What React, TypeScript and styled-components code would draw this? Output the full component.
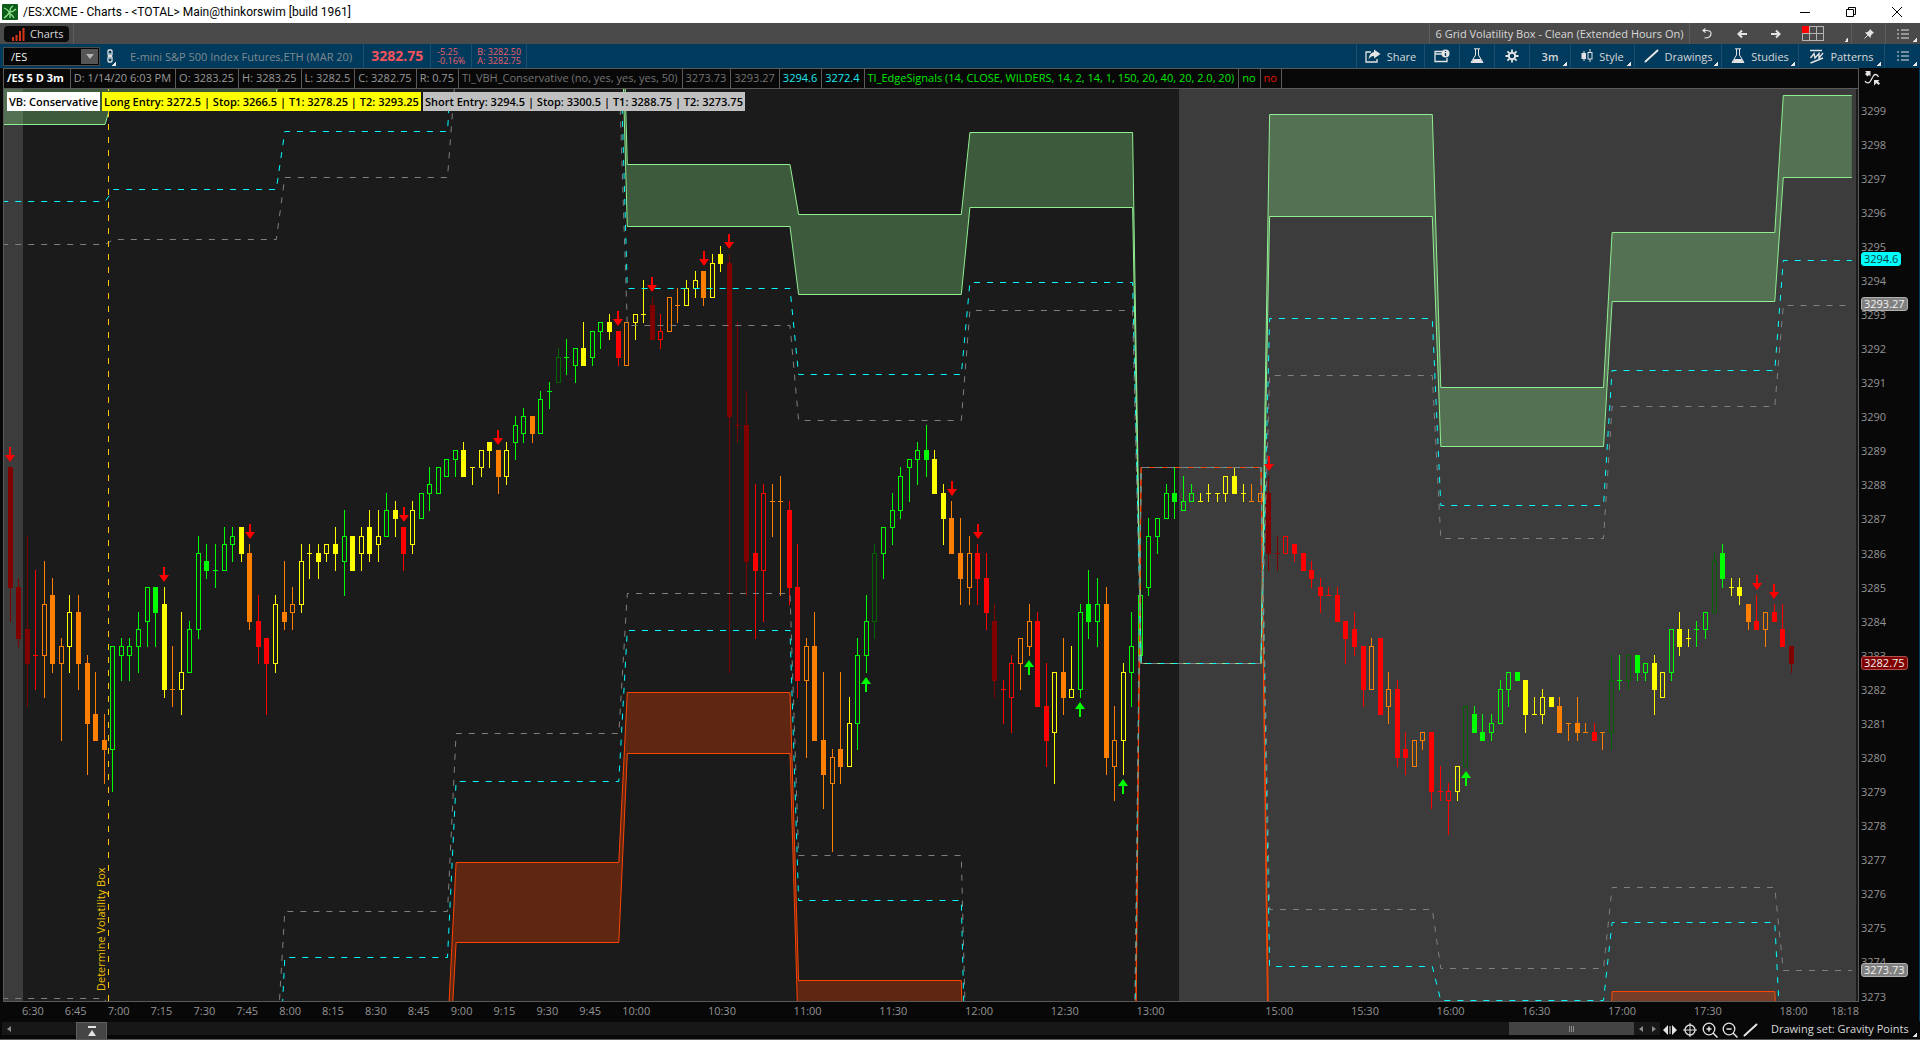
import React from "react";
import styled, { createGlobalStyle } from "styled-components";

const FONT = '"Open Sans", "Noto Sans", sans-serif';

const GlobalStyle = createGlobalStyle`
  * { box-sizing: border-box; }
  body { margin: 0; background: #080808; font-family: ${FONT}; font-size: 11px; }
  button, input, select { font: inherit; color: inherit; }
`;

/* ---------- frame ---------- */

const Page = styled.div`
  display: flex;
  flex-direction: column;
  height: 100vh;
  background: #080808;
  color: #d8d8d8;
  overflow: hidden;
`;

const TitleBar = styled.header`
  display: flex;
  align-items: center;
  flex: none;
  height: 23px;
  padding-left: 2px;
  background: #fff;
  color: #000;
`;

const WindowTitle = styled.h1`
  flex: 1;
  margin: 0 0 0 5px;
  font-family: Roboto, "Open Sans", sans-serif;
  font-size: 12px;
  font-weight: 400;
  line-height: 22px;
`;

const WindowButton = styled.button`
  display: flex;
  align-items: center;
  justify-content: center;
  width: 46px;
  height: 22px;
  padding: 0;
  border: 0;
  background: none;
`;

const Bar = styled.div`
  display: flex;
  align-items: stretch;
  flex: none;
`;

const TabBar = styled(Bar)`
  height: 21px;
  background: #4a4a4a;
`;

const SymbolBar = styled(Bar)`
  height: 24px;
  background: #003a5c;
`;

const Spacer = styled.div`
  flex: 1;
`;

const TabHolder = styled.div`
  display: flex;
  align-items: center;
  padding: 0 4px;
  border-right: 1px solid #5c5c5c;
`;

const Tab = styled.button`
  display: flex;
  align-items: center;
  gap: 5px;
  height: 16px;
  padding: 0 6px 0 8px;
  border: 0;
  border-radius: 4px;
  background: #0b0b0b;
  line-height: 16px;
`;

const ToolButton = styled.button<{ $w: number; $line?: string; $corner?: boolean; $end?: number }>`
  display: flex;
  align-items: center;
  justify-content: center;
  gap: 6px;
  width: ${(p) => p.$w}px;
  padding: 0 ${(p) => p.$end ?? 0}px 0 0;
  border: 0;
  border-left: 1px solid ${(p) => p.$line ?? "transparent"};
  background: ${(p) =>
    p.$corner
      ? "linear-gradient(135deg, transparent 50%, #e8e8e8 50%) right 3px bottom 2px / 4px 4px no-repeat"
      : "none"};
  font-size: 11px;
  white-space: nowrap;
`;

const SmallStrong = styled.span`
  font-weight: 600;
`;

/* ---------- symbol bar ---------- */

const SymbolBox = styled.div`
  display: flex;
  align-items: center;
  width: 97px;
  height: 19px;
  margin: 3px 0 0 3px;
  padding-right: 1px;
  border: 1px solid #4b4b4b;
  background: #060606;
`;

const SymbolInput = styled.input`
  flex: 1;
  min-width: 0;
  height: 17px;
  padding: 0 0 0 7px;
  border: 0;
  background: none;
  color: #f2f2f2;
  font-size: 11px;
`;

const DropButton = styled.button`
  display: flex;
  align-items: center;
  justify-content: center;
  width: 17px;
  height: 15px;
  padding: 0;
  border: 0;
  background: #555;
`;

const Field = styled.div<{ $pad: number; $color?: string }>`
  display: flex;
  flex-direction: column;
  justify-content: center;
  padding: 0 ${(p) => p.$pad}px;
  border-right: 1px solid #1c4d6c;
  color: ${(p) => p.$color ?? "#ec5f67"};
  white-space: nowrap;
`;

const Instrument = styled.span`
  color: #7f8a90;
`;

const LastPrice = styled.strong`
  font-size: 14px;
  line-height: 20px;
  color: #f4545c;
`;

const Tiny = styled.span`
  font-size: 9px;
  line-height: 9px;
`;

/* ---------- workspace ---------- */

const Workspace = styled.main`
  flex: 1;
  min-height: 0;
  display: grid;
  grid-template-columns: minmax(0, 1fr) 60px;
  padding-left: 3px;
  border-right: 1px solid #003a5c;
`;

const ChartColumn = styled.section`
  display: flex;
  flex-direction: column;
  min-width: 0;
  min-height: 0;
`;

const ChartFrame = styled.div`
  flex: 1;
  min-height: 0;
  display: flex;
  flex-direction: column;
  border: 1px solid #5a5a5a;
`;

const Legend = styled.ul`
  display: flex;
  flex: none;
  height: 20px;
  margin: 0;
  padding: 0;
  list-style: none;
  border-bottom: 1px solid #5a5a5a;
  overflow: hidden;
`;

const LegendItem = styled.li<{ $color?: string; $bold?: boolean }>`
  padding: 0 ${(p) => (p.$bold ? 6 : 4)}px 0 3px;
  border-right: 1px solid #5a5a5a;
  color: ${(p) => p.$color ?? "#9a9a9a"};
  font-size: 11px;
  font-weight: ${(p) => (p.$bold ? 700 : 400)};
  line-height: 18px;
  white-space: nowrap;
`;

const Plot = styled.div`
  position: relative;
  flex: 1;
  min-height: 0;
  display: flex;
  padding-right: 2px;
  background: #1b1b1b;
`;

const PlotSvg = styled.svg`
  flex: 1;
  min-width: 0;
  height: 100%;
`;

const Notes = styled.div`
  position: absolute;
  top: 3px;
  left: 3px;
  display: flex;
  gap: 2px;
`;

const Note = styled.span<{ $bg: string }>`
  padding: 0 2px;
  background: ${(p) => p.$bg};
  color: #000;
  font-size: 11px;
  font-weight: 600;
  line-height: 19px;
  white-space: nowrap;
`;

const TimeAxis = styled.div`
  display: grid;
  grid-template-columns: repeat(14, 5fr) repeat(6, 10fr) 15fr repeat(6, 10fr) 6fr 28px;
  flex: none;
  height: 19px;
  padding: 0 0 0 19px;
  color: #949494;
  line-height: 18px;

  span { min-width: 0; white-space: nowrap; }
`;

const PriceAxis = styled.aside`
  display: flex;
  flex-direction: column;
  padding: 2px 0 8px 2px;
  color: #949494;
`;

const ScaleButton = styled.button`
  display: flex;
  width: 20px;
  height: 18px;
  margin: 0 0 5px 3px;
  padding: 0;
  border: 0;
  background: none;
`;

const PriceList = styled.div`
  position: relative;
  flex: 1;
  display: flex;
  flex-direction: column;
`;

const PriceLabel = styled.span`
  flex: 1;
  display: flex;
  align-items: center;
  min-height: 0;
`;

const Badges = styled.div`
  position: absolute;
  inset: -1px 0 1px;
`;

const Badge = styled.span<{ $bg: string; $fg: string; $edge: string; $at: number }>`
  position: absolute;
  top: ${(p) => p.$at}%;
  transform: translateY(-50%);
  padding: 0 2px;
  border: 1px solid ${(p) => p.$edge};
  border-radius: 3px;
  background: ${(p) => p.$bg};
  color: ${(p) => p.$fg};
  line-height: 12px;
`;

/* ---------- bottom bar ---------- */

const BottomBar = styled.footer`
  display: flex;
  flex: none;
  height: 19px;
  padding-left: 2px;
  border-bottom: 1px solid #5a5a5a;
`;

const ScrollTrack = styled.div`
  flex: 1;
  display: flex;
  align-items: stretch;
  height: 13px;
  margin-top: 1px;
  background: #171717;
`;

const ScrollArrow = styled.button`
  display: flex;
  align-items: center;
  justify-content: center;
  width: 13px;
  padding: 0;
  border: 0;
  background: none;
`;

const PanelToggle = styled.button`
  display: flex;
  align-items: center;
  justify-content: center;
  width: 31px;
  height: 17px;
  margin-left: 61px;
  padding: 0;
  border: 1px solid #5e5e5e;
  border-bottom: 0;
  background: #454545;
`;

const Thumb = styled.div`
  display: flex;
  align-items: center;
  justify-content: center;
  gap: 1px;
  width: 125px;
  background: #434343;

  i { width: 1px; height: 6px; background: #8a8a8a; }
`;

const IconButton = styled.button`
  display: flex;
  align-items: center;
  justify-content: center;
  width: 20px;
  height: 17px;
  padding: 0;
  border: 0;
  background: none;
`;

const DrawingSet = styled.button`
  width: 160px;
  padding: 0 0 2px 11px;
  border: 0;
  background: linear-gradient(135deg, transparent 50%, #e8e8e8 50%) right 3px bottom 2px / 4px 4px no-repeat;
  line-height: 16px;
  text-align: left;
  white-space: nowrap;
`;

/* ---------- icons ---------- */

const INK = "#e4e4e4";

const Svg = ({ w, h, children }: { w: number; h: number; children: React.ReactNode }) => (
  <svg width={w} height={h} viewBox={`0 0 ${w} ${h}`} fill="none" stroke={INK} aria-hidden="true">
    {children}
  </svg>
);

const AppIcon = () => (
  <Svg w={16} h={16}>
    <rect width="16" height="16" rx="1" fill="#0d5c1c" stroke="none" />
    <path d="M2 14c3-2 5-4 6-7M8 7c0-2 1-4 3-5M8 8c2 0 4-1 6-3M7 9c2 1 4 3 5 5M7 8C6 6 5 5 2 4M8 9v5" stroke="#8fe08a" strokeWidth="1.3" />
  </Svg>
);
const BarsIcon = () => (
  <Svg w={13} h={14}>
    <path d="M1 14v-4M4.500 14V8M8 14V4M11.500 14V1" stroke="#d8361a" strokeWidth="2" />
  </Svg>
);
const Flask = () => (
  <Svg w={14} h={16}>
    <path d="M4 .8h6M5.500 1v6L1 14.500h12L8.500 7V1" />
    <path d="M3.500 11h7l2.200 4H1.300z" fill={INK} stroke="none" />
  </Svg>
);
const ListIcon = () => (
  <Svg w={12} h={10}>
    <path d="M0 1h2M4 1h8M0 5h2M4 5h8M0 9h2M4 9h8" strokeWidth="1.200" />
  </Svg>
);
const Slash = () => (
  <Svg w={15} h={14}>
    <path d="M1.500 12.500L13.500 1.500" strokeWidth="2" strokeLinecap="round" />
  </Svg>
);
const ArrowIcon = ({ flip }: { flip?: boolean }) => (
  <Svg w={10} h={10}>
    <path d={flip ? "M0 5h8M5 1.500L8.500 5 5 8.500" : "M10 5H2M5 1.500L1.500 5 5 8.500"} strokeWidth="2" />
  </Svg>
);
const GearIcon = () => (
  <Svg w={14} h={14}>
    <circle cx="7" cy="7" r="3.200" strokeWidth="2" />
    <path d="M7 .5v2.500M7 11v2.500M.5 7H3M11 7h2.500M2.400 2.400l1.800 1.800M9.800 9.800l1.800 1.800M2.400 11.600l1.800-1.800M9.800 4.200l1.800-1.800" strokeWidth="1.800" />
  </Svg>
);
const ShareIcon = () => (
  <Svg w={16} h={14}>
    <path d="M6 3H1v10h11v-3" strokeWidth="1.300" />
    <path d="M9 .5L15.500 5 9 9.500V7C6.500 7 5 8 3.500 10.500 4 6 6 3.500 9 3z" fill={INK} stroke="none" />
  </Svg>
);
const InfoWindow = () => (
  <Svg w={16} h={14}>
    <path d="M8 2.500H1v10h12V9M1 5h7" strokeWidth="1.300" />
    <circle cx="11.500" cy="4.500" r="4" fill={INK} stroke="none" />
    <path d="M11.500 2v1M11.500 4v3" stroke="#003a5c" strokeWidth="1.300" />
  </Svg>
);
const StyleIcon = () => (
  <Svg w={12} h={14}>
    <path d="M3 2v10M9 0v3.500M9 10v3" />
    <rect x=".5" y="4" width="4.500" height="6" fill={INK} stroke="none" />
    <rect x="7" y="3.500" width="4" height="6.500" />
  </Svg>
);
const PatternIcon = () => (
  <Svg w={15} h={15}>
    <path d="M1 1.500h12" strokeWidth="1.500" />
    <path d="M1.500 9L5 4.500l1 4.500 4-4.500v4.500L14 4M1.500 14L14 9" strokeWidth="1.400" />
  </Svg>
);
const LinkIcon = () => (
  <Svg w={8} h={14}>
    <rect x="2" y="1" width="4" height="5.500" rx="1" strokeWidth="1.300" />
    <rect x="2" y="7.500" width="4" height="5.500" rx="1" strokeWidth="1.300" />
    <path d="M4 4v6" strokeWidth="1.300" />
  </Svg>
);
const GridIcon = () => (
  <Svg w={22} h={15}>
    <rect x=".5" y=".5" width="21" height="14" stroke="#b4b4b4" />
    <path d="M.5 7.500h21M7.500.5v14M14.500.5v14" stroke="#b4b4b4" />
    <rect width="7" height="7" fill="#f00" stroke="none" />
  </Svg>
);
const UndoIcon = () => (
  <Svg w={10} h={11}>
    <path d="M2.500 10C7 10 9 8 9 5.500S7 2.500 4.500 2.500H1.500M3.500.5l-2.500 2 2.500 2" strokeWidth="1.200" />
  </Svg>
);
const PinIcon = () => (
  <Svg w={10} h={10}>
    <path d="M6 0l4 4-1.200.5L7 6.300 6.500 9 1 3.500 3.700 3 5.500 1.200z" fill={INK} stroke="none" />
    <path d="M4 6L.5 9.500" />
  </Svg>
);
const ScaleIcon = () => (
  <Svg w={17} h={16}>
    <path d="M1 1h5.500v5.500L5 5 3.500 6.500 1 4l1.500-1.500z" fill={INK} stroke="none" />
    <path d="M10 10h5.500l-1.500 1.500 2 2-1.500 1.500-2-2L10 15.500z" fill={INK} stroke="none" />
    <path d="M1 11c1 2 4 3 5.500 0L9 6.500C10.500 3.500 13 4 14.500 7" strokeWidth="1.300" />
  </Svg>
);

/* ---------- chart data ---------- */

// Bars as "tone high top bottom low", in quarter points above 3270.
// A capital tone is a filled body, a small one is hollow; equal top and bottom is a doji.
const BARS = `
M 74 74 60 56|M 61 60 54 53|M 66 55 51 46|R 62 52 52 48|o 63 58 52 47|O 61 59 51 50|o 54 53 51 42|y 59 57 53 50|O 59 57 51 48|O 52 51 44 38|
O 50 45 42 42|O 45 42 41 37|g 53 53 41 36|g 54 53 52 49|g 54 53 52 49|g 57 55 53 50|g 60 60 56 53|G 60 60 57 53|Y 60 58 48 47|O 53 48 48 46|
y 57 50 48 45|g 56 55 50 50|g 66 64 55 54|G 65 63 62 61|G 65 62 62 60|g 67 65 62 62|g 67 66 65 63|Y 67 67 64 63|O 65 64 56 55|R 59 56 53 51|
R 54 54 51 45|y 59 58 51 50|O 63 57 56 55|o 60 58 57 55|y 65 63 58 57|Y 65 64 64 61|Y 65 64 63 61|y 65 65 64 63|Y 67 65 64 62|g 69 66 63 59|
Y 66 66 62 62|y 67 66 64 62|Y 69 67 64 63|y 69 66 65 63|g 71 69 66 66|Y 70 69 68 66|R 67 67 64 62|y 70 69 65 64|g 71 71 68 68|g 74 72 71 69|
g 74 74 71 71|g 75 75 73 73|g 76 76 75 73|Y 77 76 73 73|Y 74 74 74 72|y 76 76 74 73|Y 77 77 76 74|O 76 76 73 71|y 77 76 73 72|g 80 79 77 75|
g 81 80 78 77|O 80 80 78 77|g 83 82 78 78|G 84 83 83 81|k 88 87 84 84|G 89 87 87 85|g 88 88 86 84|Y 91 88 86 86|g 90 90 87 86|g 91 91 90 88|
Y 92 91 90 89|R 90 90 87 86|o 91 91 86 86|y 92 92 91 89|Y 96 92 92 91|M 94 93 89 89|r 92 90 89 88|o 94 94 90 90|O 95 93 93 91|y 96 95 93 93|
y 97 96 95 94|O 97 97 94 93|y 99 98 94 94|Y 100 99 98 97|M 99 98 80 50|M 91 79 79 77|M 83 79 63 59|R 72 64 62 54|r 72 71 62 56|O 72 70 70 66|
O 73 70 70 59|R 70 69 60 58|R 65 60 49 47|o 54 53 49 40|O 57 53 42 42|O 50 42 38 34|o 41 40 37 29|O 50 41 39 37|y 47 44 39 39|g 54 52 44 41|
g 59 56 52 50|k 65 64 56 54|g 67 67 64 61|g 71 69 67 65|g 74 73 69 68|g 75 75 74 70|g 77 76 75 72|G 79 76 75 73|Y 76 75 71 71|Y 72 71 68 65|
O 70 68 64 64|O 68 64 61 58|o 66 64 60 58|R 65 64 61 58|R 64 61 57 55|M 58 56 49 47|R 49 48 48 44|r 52 51 47 43|o 54 54 51 48|o 58 56 53 52|
R 57 56 46 46|R 51 46 42 39|y 50 50 43 37|O 54 50 47 45|y 53 48 47 47|g 58 57 48 47|G 62 58 56 54|g 61 58 56 53|O 60 58 40 38|o 46 42 39 35|
y 51 50 42 38|g 57 53 50 46|g 62 59 52 52|g 68 66 60 59|g 68 68 66 64|g 72 71 68 68|G 74 71 70 68|g 73 70 69 69|g 72 71 70 70|Y 71 70 70 70|
Y 72 71 71 70|Y 71 71 71 70|y 73 73 71 70|Y 74 73 71 71|Y 72 71 71 70|O 72 70 70 70|o 71 71 70 70|M 73 71 64 62|M 66 64 64 62|r 66 66 64 64|
R 65 65 64 63|R 64 64 62 62|R 63 62 61 60|R 61 60 59 57|R 60 59 59 59|R 60 59 56 56|R 56 56 54 51|R 57 55 53 52|R 53 53 48 46|o 54 53 48 48|
R 54 54 45 45|o 50 48 46 44|R 49 48 40 39|R 43 41 40 38|o 42 42 39 39|o 43 43 42 41|R 43 43 36 34|R 39 36 36 35|r 37 36 35 31|y 39 39 36 35|
k 46 46 39 39|G 46 45 43 43|G 45 43 42 42|g 45 44 43 42|g 49 48 44 44|g 50 50 48 46|G 50 50 49 49|Y 49 49 45 43|Y 47 45 45 45|y 48 47 45 44|
Y 47 47 46 46|O 47 46 43 43|O 44 44 44 42|O 47 44 43 42|O 44 43 43 43|R 44 43 42 42|O 43 43 43 41|k 52 49 43 41|G 52 49 49 48|k 52 52 49 48|
G 52 52 50 49|g 51 51 50 49|Y 52 51 48 45|y 50 50 47 47|g 55 55 50 49|Y 57 55 53 52|Y 55 54 54 53|G 56 55 55 53|g 57 57 55 54|k 64 63 57 57|
G 65 64 61 60|Y 61 60 60 59|Y 61 60 59 58|O 58 58 56 55|R 59 56 55 55|o 57 57 55 53|R 58 57 56 56|R 58 55 53 53|M 53 53 51 50`
  .split("|")
  .map((row) => {
    const [tone, ...n] = row.trim().split(" ");
    const [high, top, bottom, low] = n.map(Number);
    return { tone, high, top, bottom, low };
  });

const TONES: Record<string, string> = {
  m: "#800000", r: "#ff0000", o: "#ff8000", y: "#ffff00", g: "#00ff00", k: "#006400",
};

const SELL = [0, 18, 28, 46, 57, 71, 75, 81, 84, 110, 113, 147, 204, 206];
const BUY = [100, 119, 125, 130, 170];

const STEP = 8.563;
const xOf = (bar: number) => Math.floor(10.05 + STEP * bar);
const arrowX = (bar: number) => Math.round(10 + STEP * bar);
const lineX = (bar: number) => (10.8 + STEP * bar).toFixed(1);
const yOf = (tick: number) => Math.round(1098 - 8.5225 * tick);

// First and last bar of each hourly session.
const SESSIONS = [
  [-1, 11], [12, 31], [32, 51], [52, 71], [72, 91], [92, 111], [112, 131],
  [132, 146], [147, 166], [167, 186], [187, 206], [207, 215],
];

// One level for each session, in plot units.
const LEVELS = {
  shortTop: [40, 20, -60, -150, 164, 214, 132, 663, 114, 387, 232, 95],
  shortBottom: [124, 95, 20, -80, 226, 294, 207, 663, 216, 446, 301, 177],
  longTop: [1300, 1250, 1033, 862, 692, 980, 1330, 467, 1100, 1180, 991, 1150],
  longBottom: [1400, 1350, 1095, 942, 753, 1045, 1400, 467, 1180, 1260, 1060, 1220],
  shortEntry: [201, 189, 131, -10, 288, 374, 282, 663, 318, 505, 370, 260],
  shortTarget: [244, 239, 177, 65, 325, 420, 310, 663, 375, 538, 406, 305],
  longEntry: [1180, 1130, 957, 781, 630, 900, 1260, 467, 966, 1000, 922, 1090],
  longTarget: [998, 1054, 911, 733, 593, 855, 1200, 467, 909, 968, 887, 970],
};

const points = (levels: number[]) =>
  levels.flatMap((y, i) => SESSIONS[i].map((bar) => `${lineX(bar)},${y + 0.5}`));

const Band = ({ a, b, color }: { a: number[]; b: number[]; color: string }) => (
  <g stroke={color} fill="none">
    <polygon points={[...points(a), ...points(b).reverse()].join(" ")} fill={color} fillOpacity="0.3" stroke="none" />
    <polyline points={points(a).join(" ")} />
    <polyline points={points(b).join(" ")} />
  </g>
);

const Dashed = ({ levels, color }: { levels: number[]; color: string }) => (
  <polyline points={points(levels).join(" ")} fill="none" stroke={color} strokeDasharray="6 7" />
);

const Candles = () => (
  <g shapeRendering="crispEdges">
    {BARS.map(({ tone, high, top, bottom, low }, i) => {
      const color = TONES[tone.toLowerCase()];
      const x = xOf(i);
      const [yh, yt, yb, yl] = [high, top, bottom, low].map(yOf);
      const hollow = tone === tone.toLowerCase();
      return (
        <g key={i} fill={color}>
          {yh < yt && <rect x={x} y={yh} width="1" height={yt - yh} />}
          {yl > yb && <rect x={x} y={yb + 1} width="1" height={yl - yb} />}
          {hollow ? (
            <rect x={x - 1.5} y={yt + 0.5} width="4" height={yb - yt} fill="none" stroke={color} />
          ) : (
            <rect x={x - 2} y={yt} width="5" height={yb - yt + 1} />
          )}
        </g>
      );
    })}
  </g>
);

const Signals = () => (
  <g>
    {SELL.map((i) => (
      <path key={i} transform={`translate(${arrowX(i)} ${yOf(BARS[i].high) - 5})`} d="M-1-15h2v8h4l-5 7-5-7h4z" fill="#f00" />
    ))}
    {BUY.map((i) => (
      <path key={i} transform={`translate(${arrowX(i)} ${yOf(BARS[i].low) + 5})`} d="M-1 15h2v-8h4L0 0l-5 7h4z" fill="#0f0" />
    ))}
  </g>
);

const Chart = () => (
  <PlotSvg viewBox="4 89 1852 912" preserveAspectRatio="none" role="img" aria-label="E-mini S&P 500 three minute candles">
    <rect x="4" y="89" width="19" height="912" fill="#3c3c3c" />
    <rect x="1179" y="89" width="677" height="912" fill="#3c3c3c" />
    <Candles />
    <Band a={LEVELS.shortTop} b={LEVELS.shortBottom} color="#90ee90" />
    <Band a={LEVELS.longTop} b={LEVELS.longBottom} color="#ff4500" />
    <Dashed levels={LEVELS.shortEntry} color="#00ffff" />
    <Dashed levels={LEVELS.longEntry} color="#00ffff" />
    <Dashed levels={LEVELS.shortTarget} color="#808080" />
    <Dashed levels={LEVELS.longTarget} color="#808080" />
    <path d="M108.500 85V1001" stroke="#ffc800" strokeDasharray="6 7" />
    <text transform="translate(105 991) rotate(-90)" fill="#f0c000" fontSize="11" fontFamily={FONT}>
      Determine Volatility Box
    </text>
    <Signals />
  </PlotSvg>
);

/* ---------- texts ---------- */

const CYAN = "#1fe8f0";
const LEGEND: { text: string; color?: string; bold?: boolean }[] = [
  { text: "/ES 5 D 3m", color: "#fff", bold: true },
  { text: "D: 1/14/20 6:03 PM" },
  { text: "O: 3283.25" },
  { text: "H: 3283.25" },
  { text: "L: 3282.5" },
  { text: "C: 3282.75" },
  { text: "R: 0.75" },
  { text: "TI_VBH_Conservative (no, yes, yes, yes, 50)", color: "#747474" },
  { text: "3273.73", color: "#747474" },
  { text: "3293.27", color: "#747474" },
  { text: "3294.6", color: CYAN },
  { text: "3272.4", color: CYAN },
  { text: "TI_EdgeSignals (14, CLOSE, WILDERS, 14, 2, 14, 1, 150, 20, 40, 20, 2.0, 20)", color: "#00e600" },
  { text: "no", color: "#00e600" },
  { text: "no", color: "#e61400" },
];

const TIMES =
  "6:30 6:45 7:00 7:15 7:30 7:45 8:00 8:15 8:30 8:45 9:00 9:15 9:30 9:45 10:00 10:30 11:00 11:30 12:00 12:30 13:00 15:00 15:30 16:00 16:30 17:00 17:30 18:00 18:18".split(" ");

const PRICES = Array.from({ length: 27 }, (_, i) => 3299 - i);
const atPrice = (p: number) => ((3299.5 - p) / 27) * 100;

const LINE = "#1c4d6c";
const GREY_LINE = "#5c5c5c";

export default function App() {
  return (
    <Page>
      <GlobalStyle />
      <TitleBar>
        <AppIcon />
        <WindowTitle>/ES:XCME - Charts - &lt;TOTAL&gt; Main@thinkorswim [build 1961]</WindowTitle>
        <WindowButton aria-label="Minimize">
          <Svg w={10} h={10}><path d="M0 5.500h10" stroke="#000" /></Svg>
        </WindowButton>
        <WindowButton aria-label="Restore">
          <Svg w={10} h={10}><path d="M.5 2.500h7v7h-7zM2.500 2.500v-2h7v7h-2" stroke="#000" /></Svg>
        </WindowButton>
        <WindowButton aria-label="Close">
          <Svg w={10} h={10}><path d="M0 0l10 10M10 0L0 10" stroke="#000" /></Svg>
        </WindowButton>
      </TitleBar>

      <TabBar>
        <TabHolder>
          <Tab><BarsIcon />Charts</Tab>
        </TabHolder>
        <Spacer />
        <ToolButton $w={260} $line={GREY_LINE}>6 Grid Volatility Box - Clean (Extended Hours On)</ToolButton>
        <ToolButton $w={35} $line={GREY_LINE} aria-label="Undo"><UndoIcon /></ToolButton>
        <ToolButton $w={34} aria-label="Back"><ArrowIcon /></ToolButton>
        <ToolButton $w={34} aria-label="Forward"><ArrowIcon flip /></ToolButton>
        <ToolButton $w={59} $corner $end={18} aria-label="Grid"><GridIcon /></ToolButton>
        <ToolButton $w={34} $line={GREY_LINE} aria-label="Pin"><PinIcon /></ToolButton>
        <ToolButton $w={35} $line={GREY_LINE} $corner aria-label="Menu"><ListIcon /></ToolButton>
      </TabBar>

      <SymbolBar>
        <SymbolBox>
          <SymbolInput aria-label="Symbol" defaultValue="/ES" />
          <DropButton aria-label="Recent symbols">
            <Svg w={8} h={5}><path d="M0 0h8L4 5z" fill="#b4b4b4" stroke="none" /></Svg>
          </DropButton>
        </SymbolBox>
        <ToolButton $w={19} $corner aria-label="Link"><LinkIcon /></ToolButton>
        <Field $pad={11}><Instrument>E-mini S&amp;P 500 Index Futures,ETH (MAR 20)</Instrument></Field>
        <Field $pad={7}><LastPrice>3282.75</LastPrice></Field>
        <Field $pad={6}><Tiny>-5.25</Tiny><Tiny>-0.16%</Tiny></Field>
        <Field $pad={5}><Tiny>B: 3282.50</Tiny><Tiny>A: 3282.75</Tiny></Field>
        <Spacer />
        <ToolButton $w={68} $line={LINE}><ShareIcon />Share</ToolButton>
        <ToolButton $w={35} $line={LINE} aria-label="Info"><InfoWindow /></ToolButton>
        <ToolButton $w={35} $line={LINE} aria-label="Edit studies"><Flask /></ToolButton>
        <ToolButton $w={35} $line={LINE} aria-label="Settings"><GearIcon /></ToolButton>
        <ToolButton $w={41} $line={LINE} $corner><SmallStrong>3m</SmallStrong></ToolButton>
        <ToolButton $w={64} $line={LINE} $corner><StyleIcon />Style</ToolButton>
        <ToolButton $w={87} $line={LINE} $corner><Slash />Drawings</ToolButton>
        <ToolButton $w={77} $line={LINE} $corner><Flask />Studies</ToolButton>
        <ToolButton $w={86} $line={LINE} $corner><PatternIcon />Patterns</ToolButton>
        <ToolButton $w={36} $line={LINE} $corner aria-label="Chart menu"><ListIcon /></ToolButton>
      </SymbolBar>

      <Workspace>
        <ChartColumn>
          <ChartFrame>
            <Legend>
              {LEGEND.map((item, i) => (
                <LegendItem key={i} $color={item.color} $bold={item.bold}>{item.text}</LegendItem>
              ))}
            </Legend>
            <Plot>
              <Chart />
              <Notes>
                <Note $bg="#ffffff">VB: Conservative</Note>
                <Note $bg="#ffff00">Long Entry: 3272.5 | Stop: 3266.5 | T1: 3278.25 | T2: 3293.25</Note>
                <Note $bg="#c0c0c0">Short Entry: 3294.5 | Stop: 3300.5 | T1: 3288.75 | T2: 3273.75</Note>
              </Notes>
            </Plot>
          </ChartFrame>
          <TimeAxis>
            {TIMES.map((t) => <span key={t}>{t}</span>)}
          </TimeAxis>
        </ChartColumn>
        <PriceAxis>
          <ScaleButton aria-label="Fit price scale"><ScaleIcon /></ScaleButton>
          <PriceList>
            {PRICES.map((p) => <PriceLabel key={p}>{p}</PriceLabel>)}
            <Badges>
              <Badge $at={atPrice(3294.6)} $bg="#00ffff" $fg="#083c3c" $edge="#00ffff">3294.6</Badge>
              <Badge $at={atPrice(3293.27)} $bg="#808080" $fg="#f0f0f0" $edge="#b0b0b0">3293.27</Badge>
              <Badge $at={atPrice(3282.75)} $bg="#800000" $fg="#f0f0f0" $edge="#b05050">3282.75</Badge>
              <Badge $at={atPrice(3273.73)} $bg="#808080" $fg="#f0f0f0" $edge="#b0b0b0">3273.73</Badge>
            </Badges>
          </PriceList>
        </PriceAxis>
      </Workspace>

      <BottomBar>
        <ScrollTrack>
          <ScrollArrow aria-label="Scroll to start">
            <Svg w={4} h={6}><path d="M4 0v6L0 3z" fill="#8a8a8a" stroke="none" /></Svg>
          </ScrollArrow>
          <PanelToggle aria-label="Show lower panel">
            <Svg w={8} h={10}><path d="M0 1h8" strokeWidth="2" /><path d="M4 4l4 6H0z" fill={INK} stroke="none" /></Svg>
          </PanelToggle>
          <Spacer />
          <Thumb><i /><i /><i /></Thumb>
          <ScrollArrow aria-label="Scroll left">
            <Svg w={4} h={6}><path d="M4 0v6L0 3z" fill="#8a8a8a" stroke="none" /></Svg>
          </ScrollArrow>
          <ScrollArrow aria-label="Scroll right">
            <Svg w={4} h={6}><path d="M0 0v6l4-3z" fill="#8a8a8a" stroke="none" /></Svg>
          </ScrollArrow>
        </ScrollTrack>
        <IconButton aria-label="Expand time axis">
          <Svg w={14} h={10}>
            <path d="M5 0v10L0 5zM9 0v10l5-5z" fill={INK} stroke="none" />
            <path d="M7 1v8" />
          </Svg>
        </IconButton>
        <IconButton aria-label="Crosshair">
          <Svg w={14} h={14}><circle cx="7" cy="7" r="5" strokeWidth="1.300" /><path d="M7 0v14M0 7h14" /></Svg>
        </IconButton>
        <IconButton aria-label="Zoom in">
          <Svg w={16} h={16}><circle cx="7" cy="7" r="5.800" strokeWidth="1.300" /><path d="M4.500 7h5M7 4.500v5M11 11l4.500 4.500" strokeWidth="1.500" /></Svg>
        </IconButton>
        <IconButton aria-label="Zoom out">
          <Svg w={16} h={16}><circle cx="7" cy="7" r="5.800" strokeWidth="1.300" /><path d="M4.500 7h5M11 11l4.500 4.500" strokeWidth="1.500" /></Svg>
        </IconButton>
        <IconButton aria-label="Draw line"><Slash /></IconButton>
        <DrawingSet>Drawing set: Gravity Points</DrawingSet>
      </BottomBar>
    </Page>
  );
}
